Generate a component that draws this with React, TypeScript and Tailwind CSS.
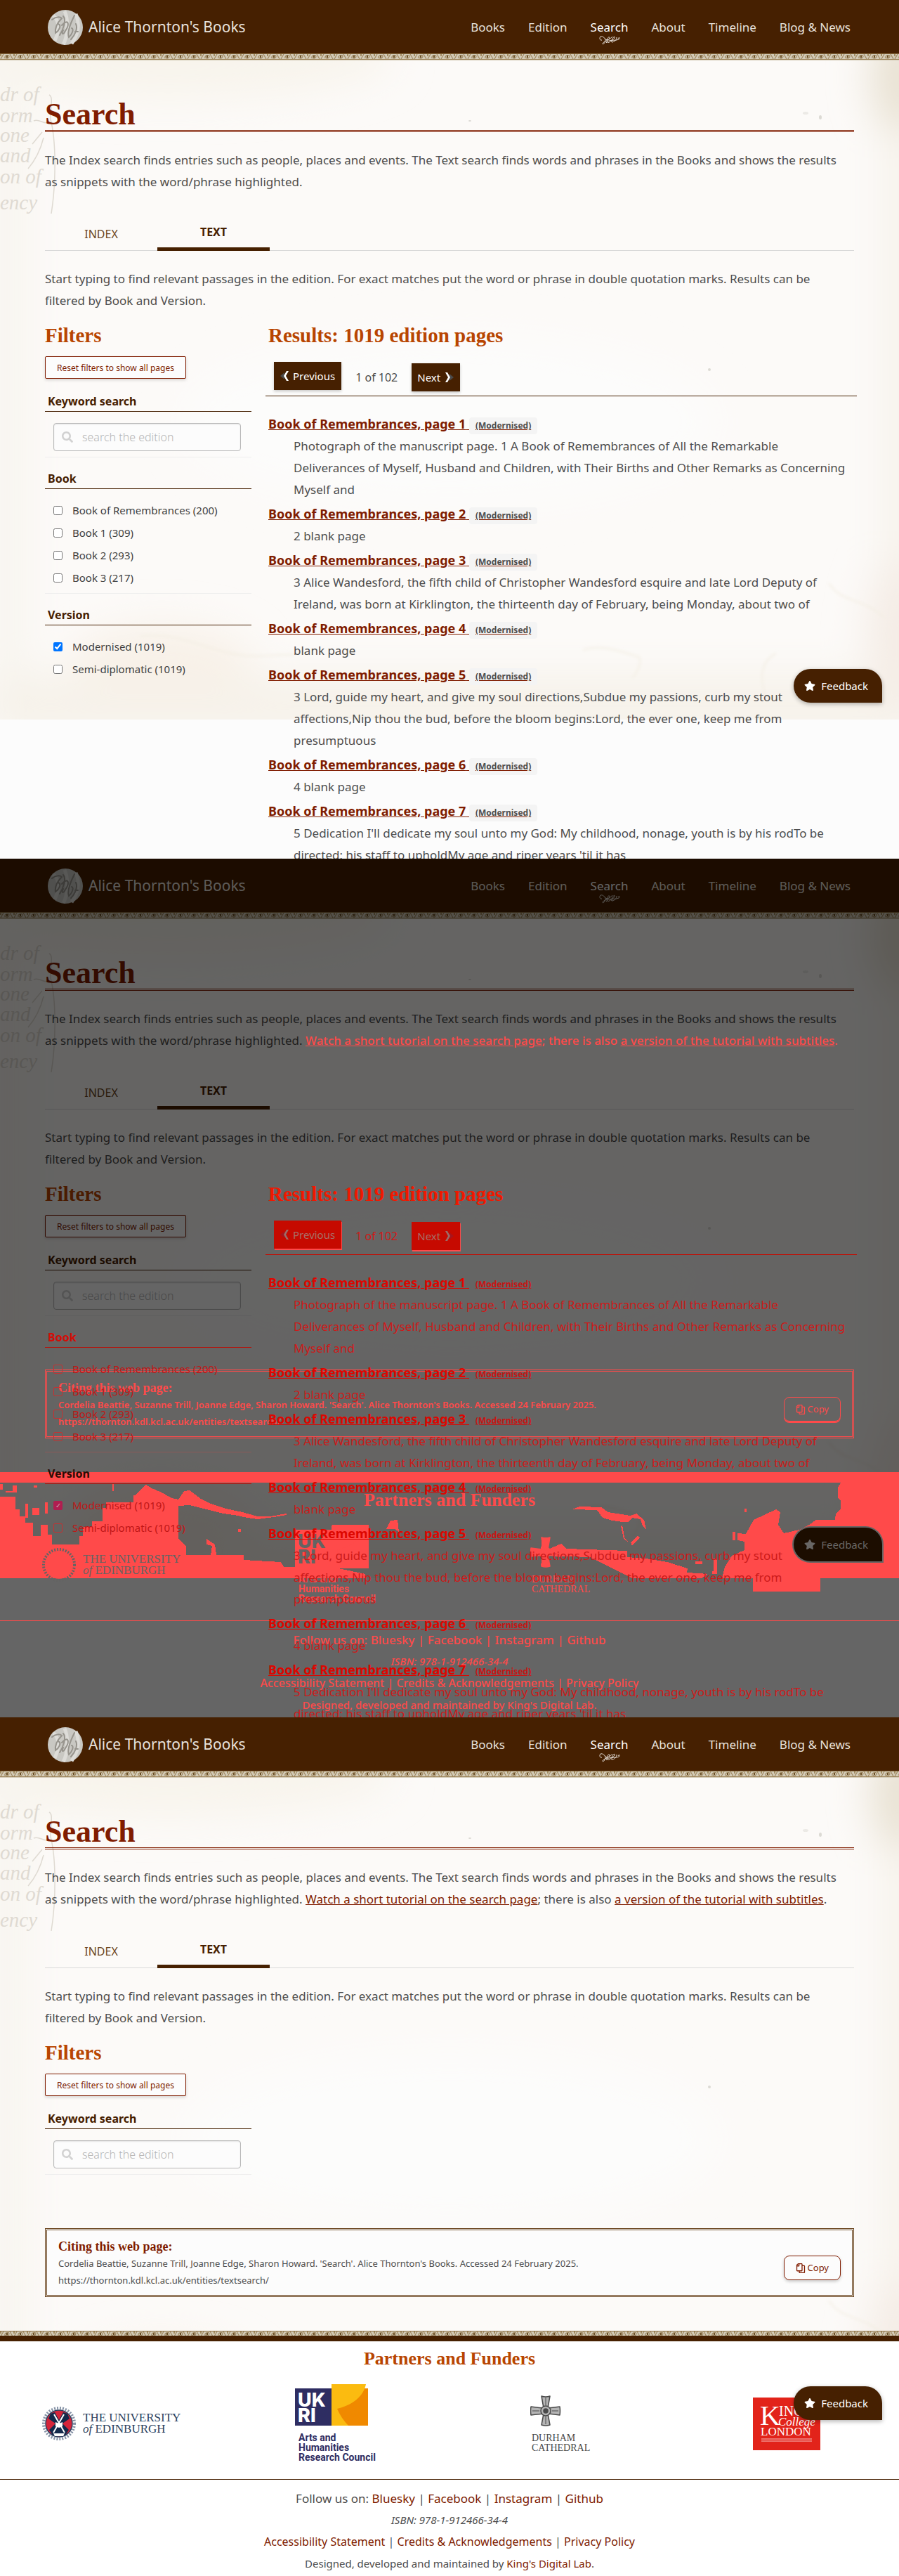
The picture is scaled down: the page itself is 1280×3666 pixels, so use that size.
import React, { useId } from "react";
import { FaSearch, FaStar, FaRegCopy } from "react-icons/fa";

type Variant = "before" | "diff" | "after";

const navItems = ["Books", "Edition", "Search", "About", "Timeline", "Blog & News"];

const results = [
  "Photograph of the manuscript page. 1 A Book of Remembrances of All the Remarkable Deliverances of Myself, Husband and Children, with Their Births and Other Remarks as Concerning Myself and",
  "2 blank page",
  "3 Alice Wandesford, the fifth child of Christopher Wandesford esquire and late Lord Deputy of Ireland, was born at Kirklington, the thirteenth day of February, being Monday, about two of",
  "blank page",
  "3 Lord, guide my heart, and give my soul directions,Subdue my passions, curb my stout affections,Nip thou the bud, before the bloom begins:Lord, the ever one, keep me from presumptuous",
  "4 blank page",
  "5 Dedication I'll dedicate my soul unto my God: My childhood, nonage, youth is by his rodTo be directed; his staff to upholdMy age and riper years 'til it has",
];

function Parchment() {
  const id = useId();
  return (
    <svg
      aria-hidden="true"
      className="absolute inset-x-0 top-0 -z-10 h-[1024px] w-full"
      viewBox="0 0 1280 1024"
      preserveAspectRatio="none"
    >
      <defs>
        <filter id={id + "b"} x="-50%" y="-50%" width="200%" height="200%">
          <feGaussianBlur stdDeviation="28" />
        </filter>
        <filter id={id + "s"} x="-50%" y="-50%" width="200%" height="200%">
          <feGaussianBlur stdDeviation="2" />
        </filter>
      </defs>
      <rect width="1280" height="1024" fill="#fcfaf8" />
      <g filter={`url(#${id}b)`}>
        <ellipse cx="240" cy="80" rx="320" ry="60" fill="#f8f4ec" />
        <rect x="-20" y="60" width="60" height="960" fill="#f8f5ef" />
        <rect x="1260" y="60" width="60" height="960" fill="#f6f2ea" />
        <ellipse cx="1285" cy="110" rx="45" ry="80" fill="#e8e1d2" />
        <rect x="-20" y="960" width="1320" height="90" fill="#f6f2ea" />
        <ellipse cx="1285" cy="900" rx="50" ry="110" fill="#f4ece5" />
        <ellipse cx="230" cy="940" rx="130" ry="50" fill="#f8f1e8" />
        <ellipse cx="640" cy="600" rx="380" ry="120" fill="#fcfcfb" />
      </g>
      <g fill="none" stroke="#f3eee3" strokeWidth="2" filter={`url(#${id}s)`}>
        <path d="M200 905C260 900 290 925 340 932C370 937 400 930 420 932" />
        <path d="M830 925C860 915 890 930 910 935C915 945 905 960 900 965" />
        <path d="M1090 990C1080 960 1085 940 1105 930" />
        <path d="M1180 830C1200 860 1230 850 1260 880" />
      </g>
      <g fill="#dcdad4">
        <ellipse cx="1168" cy="167" rx="2" ry="3" />
        <ellipse cx="1147" cy="161" rx="4" ry="2" opacity=".5" />
        <ellipse cx="669" cy="172" rx="2" ry="1" />
        <ellipse cx="1010" cy="526" rx="2" ry="2" />
      </g>
      <g fill="#dfdad2" fontFamily="'Liberation Serif', serif" fontStyle="italic" fontSize="29">
        <text x="0" y="144">dr of</text>
        <text x="0" y="174">orm</text>
        <text x="0" y="202">one</text>
        <text x="0" y="231">and</text>
        <text x="0" y="261">on of</text>
        <text x="0" y="298">ency</text>
      </g>
      <path
        d="M70 135C76 138 72 150 72 170C80 200 80 260 73 304M48 172C56 168 62 178 70 174M60 188L46 205M62 196C58 212 52 226 40 240"
        fill="none"
        stroke="#dfdad2"
        strokeWidth="1.5"
      />
    </svg>
  );
}

function LaceBand({ tall }: { tall?: boolean }) {
  const id = useId();
  return (
    <svg aria-hidden="true" className={tall ? "block h-[10px] w-full" : "block h-[7px] w-full"}>
      <defs>
        <pattern id={id} width="19" height="10" patternUnits="userSpaceOnUse">
          <rect width="19" height="10" fill="#d3cbb8" />
          <rect width="19" height="1" fill="#8a6c3e" />
          <rect y="8" width="19" height="1" fill="#9a8054" />
          <path d="M1 8L5 1M18 8L14 1M7 7C6 3 12 1 13 4C13 7 9 8 8 6" fill="none" stroke="#a08860" strokeWidth="1.2" />
          <rect x="9" y="3" width="2" height="3" fill="#6b5028" />
          <rect x="0" y="1" width="2" height="3" fill="#a48d62" />
        </pattern>
      </defs>
      <rect width="100%" height="10" fill={`url(#${id})`} />
    </svg>
  );
}

function Monogram() {
  return (
    <svg aria-hidden="true" viewBox="0 0 50 50" className="size-[50px]">
      <circle cx="25" cy="25" r="25" fill="#c9c8c3" />
      <path
        d="M8 8C20 20 14 34 10 44M40 6C46 20 44 34 34 48M24 2C30 14 28 40 22 49"
        stroke="#dddcd8"
        strokeWidth="5"
        fill="none"
      />
      <path
        d="M6 14C12 9 18 10 20 12C14 18 10 26 11 33C16 30 20 22 15 20M22 9C27 14 22 28 17 36M20 22C29 12 32 20 25 30C22 36 19 35 22 29M38 8C33 18 27 32 30 39C34 36 38 27 34 26M40 20C43 26 39 36 33 42M39 31L43 31"
        fill="none"
        stroke="#97948d"
        strokeWidth="2"
        strokeLinecap="round"
      />
    </svg>
  );
}

function Flourish() {
  return (
    <svg aria-hidden="true" viewBox="0 0 30 13" className="absolute left-1/2 top-full h-[13px] w-[30px] -translate-x-1/2">
      <path
        d="M4 6C1 7 0 3 2 1C5 0 9 3 9 7C8 11 5 13 5 11C6 8 14 7 15 3C15 0 11 3 11 7C11 11 15 10 18 6C20 1 23 0 22 3C20 6 15 9 19 9C23 8 25 5 25 2M10 10C14 4 22 8 28 5C31 3 28 1 27 4M8 4C12 8 16 4 19 1"
        fill="none"
        stroke="#e6dfd8"
        strokeWidth="1"
      />
    </svg>
  );
}

function Header() {
  return (
    <header>
      <div className="flex h-[76px] items-center justify-between bg-[#462001] pl-[68px] pr-[69px] pt-0.5 text-[#e8e2dc]">
        <a href="#" className="flex items-center gap-2 text-[21px]">
          <Monogram />
          Alice Thornton's Books
        </a>
        <nav className="flex gap-[33px] text-[17px] leading-6">
          {navItems.map((item) => (
            <a key={item} href="#" className={item === "Search" ? "relative text-white" : ""}>
              {item}
              {item === "Search" && <Flourish />}
            </a>
          ))}
        </nav>
      </div>
      <LaceBand tall />
    </header>
  );
}

function FilterGroup({
  title,
  options,
  changed,
  titleChanged,
  last,
}: {
  title: string;
  options: [string, boolean][];
  changed: boolean;
  titleChanged?: boolean;
  last?: boolean;
}) {
  const id = useId();
  return (
    <section className={changed ? "relative z-30" : ""}>
      <h3
        className={
          "mt-[18px] border-b px-1 pb-0.5 text-[16px] font-bold leading-6 " +
          (changed
            ? "border-[#b81008] " + (titleChanged ? "text-[#d40c06]" : "text-[#2a0c04]")
            : "border-[#462001] text-[#462001]")
        }
      >
        {title}
      </h3>
      <ul
        className={
          "mt-[14px] " +
          (last ? "" : changed ? "border-b border-[#8c5a58] pb-[6px]" : "border-b border-[#eeeeee] pb-[6px]")
        }
      >
        {options.map(([label, checked]) => (
          <li key={label} className="flex h-8 items-center pl-3">
            <input
              id={id + label}
              type="checkbox"
              defaultChecked={checked}
              className={
                changed
                  ? "grid size-[13px] appearance-none place-items-center rounded-[2px] border border-[#c43232] text-[10px] leading-none text-[#c9a0b0] checked:border-[#b01e50] checked:bg-[#b01e50] checked:before:content-['✓']"
                  : "size-[13px] accent-[#0075ff]"
              }
            />
            <label
              htmlFor={id + label}
              className={"pl-[14px] text-[15px] " + (changed ? "text-[#c01616]" : "text-[#3f3f3f]")}
            >
              {label}
            </label>
          </li>
        ))}
      </ul>
    </section>
  );
}

function Filters({ variant }: { variant: Variant }) {
  const id = useId();
  const changed = variant === "diff";
  return (
    <aside>
      <h2 className="pb-0.5 font-['Liberation_Serif',serif] text-[29px] font-bold leading-[30px] text-[#b84500]">
        Filters
      </h2>
      <button
        type="button"
        className="mt-[13px] block h-8 rounded-[2px] border border-[#801c00] bg-[#fcfcfc] px-4 text-[12px] text-[#801c00] shadow-[0_2px_4px_rgba(0,0,0,0.15)]"
      >
        Reset filters to show all pages
      </button>
      <h3 className="mt-5 border-b border-[#462001] px-1 pb-0.5 text-[16px] font-bold leading-6 text-[#462001]">
        <label htmlFor={id}>Keyword search</label>
      </h3>
      <div className="border-b border-[#eeeeee] pb-2 pl-3 pr-[15px] pt-4">
        <div className="flex h-10 items-center rounded border border-[#b8b8b8] bg-[#fcfcfc] pl-[11px] shadow-[inset_0_1px_2px_rgba(0,0,0,0.1)]">
          <FaSearch className="size-4 shrink-0 text-[#d2d2d2]" aria-hidden="true" />
          <input
            id={id}
            type="text"
            placeholder="search the edition"
            className="min-w-0 flex-1 bg-transparent pl-[13px] text-[16px] font-light outline-none placeholder:text-[#b5b5b5]"
          />
        </div>
      </div>
      {variant !== "after" && (
        <>
          <FilterGroup
            title="Book"
            changed={changed}
            titleChanged
            options={[
              ["Book of Remembrances (200)", false],
              ["Book 1 (309)", false],
              ["Book 2 (293)", false],
              ["Book 3 (217)", false],
            ]}
          />
          <FilterGroup
            title="Version"
            changed={changed}
            last
            options={[
              ["Modernised (1019)", true],
              ["Semi-diplomatic (1019)", false],
            ]}
          />
        </>
      )}
    </aside>
  );
}

function Chevron({ flip, changed }: { flip?: boolean; changed: boolean }) {
  return (
    <svg aria-hidden="true" viewBox="0 0 16 16" className={flip ? "size-4 rotate-180" : "size-4"}>
      <path d="M7 3L1 8L7 13Z" fill={changed ? "#a8141c" : "#4a4a4a"} />
      <path d="M13 1L10 1L6 8L10 15L13 15L9 8Z" fill={changed ? "#9c6c68" : "#ffffff"} />
    </svg>
  );
}

function Results({ changed }: { changed: boolean }) {
  const button =
    "flex h-10 items-center text-[15px] " +
    (changed
      ? "bg-[#c60a00] text-[#a87068] shadow-[1px_2px_0_#ff4a4a]"
      : "bg-[#462001] text-white shadow-[0_2px_4px_rgba(0,0,0,0.2)]");
  return (
    <section className={"-mr-1 " + (changed ? "relative z-30" : "")}>
      <h2
        className={
          "pb-0.5 pl-1 font-['Liberation_Serif',serif] text-[29px] font-bold leading-[30px] " +
          (changed ? "text-[#f01800]" : "text-[#b84500]")
        }
      >
        Results: 1019 edition pages
      </h2>
      <div
        className={
          "mt-[21px] flex items-start gap-5 border-b pb-[6px] pl-3 " +
          (changed ? "border-[#c60a00]" : "border-[#462001]")
        }
      >
        <button type="button" className={button + " gap-[3px] pl-2 pr-[9px]"}>
          <Chevron changed={changed} />
          Previous
        </button>
        <span className={"mt-0.5 text-[16px] leading-10 " + (changed ? "text-[#d01818]" : "text-[#4d4d4d]")}>
          1 of 102
        </span>
        <button type="button" className={button + " mt-0.5 gap-1 px-2"}>
          Next
          <Chevron flip changed={changed} />
        </button>
      </div>
      <ol className="mt-6 flex flex-col gap-1 pl-1 text-[17px] leading-[31px]">
        {results.map((text, i) => (
          <li key={i}>
            <a href="#" className={"text-[18px] font-bold underline " + (changed ? "text-[#dd0600]" : "text-[#801c00]")}>
              Book of Remembrances, page {i + 1}{" "}
              <span
                className={
                  "inline-block rounded px-[9px] text-[12px] leading-6 underline " +
                  (changed ? "text-[#c81414]" : "bg-[#f4f4f4] text-[#4d4d4d] decoration-[#801c00]")
                }
              >
                (Modernised)
              </span>
            </a>
            <p className={"pl-9 pr-2 " + (changed ? "text-[#cc1a1a]" : "text-[#4d4d4d]")}>{text}</p>
          </li>
        ))}
      </ol>
    </section>
  );
}

function EdinburghLogo({ mono }: { mono?: boolean }) {
  const navy = mono ? "#ff4a4a" : "#2b3f5e";
  return (
    <svg role="img" aria-label="The University of Edinburgh" viewBox="0 0 200 50" className="h-[50px] w-[200px]">
      <circle cx="24" cy="25" r="22" fill="none" stroke={mono ? "#646463" : "#8592a6"} strokeWidth="4" strokeDasharray="2 2" />
      <circle cx="24" cy="25" r="19" fill={mono ? "#ff4a4a" : "#d5243a"} stroke={navy} strokeWidth="1.5" />
      {!mono && (
        <>
          <path
            d="M12 11L18 9L24 20L30 9L36 11L39 18L29 25L38 34L33 42H15L10 34L19 25L9 18Z"
            fill="#13294b"
          />
          <path d="M17 12L32 38M31 12L16 38" stroke="#fff" strokeWidth="2" />
          <path d="M19 23L24 25L29 23V29L24 31L19 29Z" fill="#fff" />
          <path d="M16 39H32L30 43H18Z" fill="#fff" />
        </>
      )}
      <g fill={mono ? "#646463" : navy} fontFamily="'Liberation Serif', serif" fontSize="17">
        <text x="58" y="22">THE UNIVERSITY</text>
        <text x="58" y="38">
          <tspan fontStyle="italic">of</tspan> EDINBURGH
        </text>
      </g>
    </svg>
  );
}

function UkriLogo({ mono }: { mono?: boolean }) {
  const navy = mono ? "#ff4a4a" : "#2e2d62";
  return (
    <svg role="img" aria-label="UKRI Arts and Humanities Research Council" viewBox="0 0 120 112" className="h-[112px] w-[120px]">
      <rect y="6" width="52" height="53" fill={navy} />
      <rect x="52" y="6" width="52" height="53" fill={mono ? "#ff4a4a" : "#f08900"} />
      <path d="M52 0H101C98 16 84 29 60 35C64 44 69 52 76 59H52Z" fill={mono ? "#ff4a4a" : "#fbbb10"} />
      <g fill={mono ? "#646463" : "#ffffff"} fontFamily="Inter, sans-serif" fontWeight="800" fontSize="27">
        <text x="4" y="32">UK</text>
        <text x="4" y="54">RI</text>
      </g>
      <g fill={navy} fontFamily="Roboto, sans-serif" fontWeight="700" fontSize="14">
        <text x="5" y="81">Arts and</text>
        <text x="5" y="95">Humanities</text>
        <text x="5" y="109">Research Council</text>
      </g>
    </svg>
  );
}

function DurhamLogo({ mono }: { mono?: boolean }) {
  const ink = mono ? "#ff4a4a" : "#4a4a4a";
  return (
    <svg role="img" aria-label="Durham Cathedral" viewBox="0 0 90 80" className="h-20 w-[90px]">
      <g fill={mono ? "#ff4a4a" : "#b4b4b4"} stroke={ink} strokeWidth="1.5" strokeLinejoin="round">
        <path d="M16 1Q22 3 28 1L25 18Q35 17 42 16Q43 22 42 28Q35 27 25 26L28 42Q22 44 16 42L19 26Q9 27 1 28Q0 22 1 16Q9 17 19 18Z" />
        <circle cx="22" cy="22" r="7" />
        <circle cx="22" cy="22" r="3" fill={ink} />
      </g>
      <path d="M22 3V14M22 30V41M3 22H13M31 22H40" stroke={ink} />
      <g fill={ink} fontFamily="'Liberation Serif', serif" fontSize="14">
        <text x="2" y="65">DURHAM</text>
        <text x="2" y="79">CATHEDRAL</text>
      </g>
    </svg>
  );
}

function KingsLogo({ mono }: { mono?: boolean }) {
  return (
    <svg role="img" aria-label="King's College London" viewBox="0 0 96 75" className="h-[75px] w-24">
      <rect width="96" height="75" fill={mono ? "#ff4a4a" : "#e2231a"} />
      {!mono && (
        <>
          <g fill="#ffffff" fontFamily="'Liberation Serif', serif">
            <text x="10" y="39" fontSize="40">K</text>
            <text x="37" y="26" fontSize="20">ING'S</text>
            <text x="36" y="40" fontSize="17" fontStyle="italic">College</text>
            <text x="11" y="54" fontSize="17">LONDON</text>
          </g>
          <path d="M12 59H84M12 62H84" stroke="#f7c6c3" strokeWidth="1" />
        </>
      )}
    </svg>
  );
}

function DiffStain() {
  return (
    <svg
      aria-hidden="true"
      viewBox="0 0 1280 136"
      preserveAspectRatio="none"
      className="absolute inset-x-0 top-[15px] -z-10 h-[136px] w-full"
      fill="#ff4a4a"
      shapeRendering="crispEdges"
    >
      <path d="M0 20H22V38H28V48H36V57H47V76H58V60H68V74H74V88H113V76H118V63H131V55H146V36H151V28H190V18H192L196 14L208 3L216 8L228 13L245 22L254 24L262 12L270 11L286 23L300 30L322 37L345 42L367 48H385L408 44V46L390 49L367 52L352 50L339 47L318 44L294 38L270 32L254 33V80L265 90V103H300L302 90L294 88V80L306 88L308 103H347V110L400 113L404 120H420V68H473V60H525V122H482L520 130V136H0Z" />
      <path d="M0 2H4V10H0ZM8 14H24V4H18V12H8ZM48 4H53V7H48ZM36 30H40V50H36ZM46 36H56V46H46ZM64 28H68V44H64ZM160 2H162V12H160ZM339 66H343V70H339Z" />
      <path d="M550 66L556 54L566 53L568 70L562 66H553Z" />
      <path d="M815 38L825 34L856 35L866 42L885 45L897 47L906 44L917 53L920 66L915 62L912 52L900 50L894 56H886L872 54L858 50L850 39Z" />
      <path d="M886 60L889 78L894 84L888 80L884 62ZM898 85L908 76L911 78L900 90Z" />
      <path d="M754 97L770 95L772 78H783L780 95L799 87L806 94L893 97V106L920 108L950 113L979 122L978 128L1008 130L999 136H900L868 120L840 106L780 104L782 118H770L772 106Z" />
      <path d="M1028 136L1032 120L1042 104L1060 96V84L1050 82V72L1062 73L1073 53L1088 46L1105 38L1111 42L1108 60L1116 72L1138 67L1152 60L1162 53H1189L1190 44L1197 37V25L1193 22V7L1197 0H1280V136Z" />
      <path d="M1014 126H1016V108H1021V130H1014ZM1043 70H1047V82H1043ZM990 112H1000V116H990ZM1060 37H1063V42H1060Z" />
    </svg>
  );
}

function CitationAndFooter({ mono }: { mono?: boolean }) {
  const link = mono ? "text-[#ff4a4a]" : "text-[#801c00]";
  const body = mono ? "text-[#ff4a4a]" : "text-[#4d4d4d]";
  return (
    <>
      <section
        className={
          "mx-16 flex items-end justify-between border-[3px] border-double px-4 pb-[9px] pt-[11px] " +
          (mono ? "border-[#ff4a4a]" : "border-[#6b4620] bg-[#fcfcfc]")
        }
      >
        <div className={"text-[13px] leading-6 " + body + (mono ? " font-semibold" : "")}>
          <h2 className={"font-['Liberation_Serif',serif] text-[18px] font-bold leading-6 " + link}>
            Citing this web page:
          </h2>
          <p>
            Cordelia Beattie, Suzanne Trill, Joanne Edge, Sharon Howard. 'Search'. Alice Thornton's Books. Accessed 24
            February 2025.
          </p>
          <p>https://thornton.kdl.kcl.ac.uk/entities/textsearch/</p>
        </div>
        <button
          type="button"
          className={
            "mb-3 flex h-[35px] items-center gap-[3px] rounded-lg border px-4 text-[13px] " +
            (mono
              ? "border-[#ff4a4a] text-[#ff4a4a] shadow-[0_2px_0_#ff4a4a]"
              : "border-[#801c00] text-[#801c00] shadow-[0_2px_4px_rgba(0,0,0,0.2)]")
          }
        >
          <FaRegCopy className="size-[14px] -scale-x-100" aria-hidden="true" />
          Copy
        </button>
      </section>
      <footer className={"relative mt-12 " + (mono ? "isolate" : "bg-white")}>
        {mono ? (
          <>
            <div className="h-[15px] bg-[#ff4a4a]" />
            <DiffStain />
          </>
        ) : (
          <>
            <LaceBand />
            <div className="h-2 bg-[#462001]" />
          </>
        )}
        <h2
          className={
            "pb-px pt-[9px] text-center font-['Liberation_Serif',serif] text-[26px] font-bold leading-8 " +
            (mono ? "text-[#ff4a4a]" : "text-[#b84500]")
          }
        >
          Partners and Funders
        </h2>
        <div
          className={
            "mt-[19px] grid grid-cols-4 place-items-center border-b pb-[23px] " +
            (mono ? "border-[#ff4a4a]" : "border-[#462001]")
          }
        >
          <EdinburghLogo mono={mono} />
          <UkriLogo mono={mono} />
          <DurhamLogo mono={mono} />
          <KingsLogo mono={mono} />
        </div>
        <div
          className={
            "pb-0.5 pt-[11px] text-center text-[15px] leading-[31px] " + body + (mono ? " font-medium" : "")
          }
        >
          <p className="text-[17px]">
            Follow us on: <a href="#" className={link}>Bluesky</a> | <a href="#" className={link}>Facebook</a> |{" "}
            <a href="#" className={link}>Instagram</a> | <a href="#" className={link}>Github</a>
          </p>
          <p className="italic">ISBN: 978-1-912466-34-4</p>
          <p className="text-[16px]">
            <a href="#" className={link}>Accessibility Statement</a> |{" "}
            <a href="#" className={link}>Credits &amp; Acknowledgements</a> |{" "}
            <a href="#" className={link}>Privacy Policy</a>
          </p>
          <p>
            Designed, developed and maintained by <a href="#" className={link}>King's Digital Lab</a>.
          </p>
        </div>
      </footer>
    </>
  );
}

function Page({ variant }: { variant: Variant }) {
  const changed = variant === "diff";
  return (
    <div
      className={
        "relative isolate bg-[#fcfcfc] text-[#4d4d4d] " + (variant === "after" ? "" : "h-[1222px] overflow-hidden")
      }
    >
      <Parchment />
      <Header />
      <main className="px-16 pt-14 text-[17px] leading-[31px]">
        <h1 className="border-b-[3px] border-double border-[#801c00] pb-[2px] font-['Liberation_Serif',serif] text-[44px] font-bold leading-[41px] text-[#801c00]">
          Search
        </h1>
        <p className="mt-6 pr-4">
          The Index search finds entries such as people, places and events. The Text search finds words and phrases in
          the Books and shows the results as snippets with the word/phrase highlighted.{" "}
          {variant !== "before" && (
            <span className={changed ? "relative z-20 font-medium text-[#ff4a4a]" : ""}>
              <a href="#" className={changed ? "underline" : "text-[#801c00] underline"}>
                Watch a short tutorial on the search page
              </a>
              ; there is also{" "}
              <a href="#" className={changed ? "underline" : "text-[#801c00] underline"}>
                a version of the tutorial with subtitles
              </a>
              .
            </span>
          )}
        </p>
        <div role="tablist" className="mt-[34px] flex h-[49px] border-b border-[#d9d9d9] text-[16px] leading-6">
          <button type="button" role="tab" aria-selected="false" className="-mb-px w-40 text-[#6b4620]">
            INDEX
          </button>
          <button
            type="button"
            role="tab"
            aria-selected="true"
            className="-mb-px w-40 border-b-[5px] border-[#462001] font-bold text-[#462001]"
          >
            TEXT
          </button>
        </div>
        <p className="mt-6 pr-4">
          Start typing to find relevant passages in the edition. For exact matches put the word or phrase in double
          quotation marks. Results can be filtered by Book and Version.
        </p>
        <div className="mt-[19px] grid grid-cols-[294px_1fr] gap-x-5">
          <Filters variant={variant} />
          {variant !== "after" && <Results changed={changed} />}
        </div>
      </main>
      {variant === "after" && (
        <div className="mt-[76px]">
          <CitationAndFooter />
        </div>
      )}
      {changed && (
        <>
          <div className="absolute inset-0 z-10 bg-black/60" />
          <div className="absolute inset-x-0 top-[727px] z-20">
            <CitationAndFooter mono />
          </div>
        </>
      )}
      <button
        type="button"
        className={
          "absolute right-6 top-[952px] z-40 flex h-12 items-center gap-2 rounded-t-[24px] rounded-bl-[24px] pl-[15px] pr-5 text-[15px] " +
          (changed
            ? "bg-[#1c0d00] text-[#686664] ring-2 ring-[#646463]"
            : "bg-[#462001] text-white shadow-[0_2px_6px_rgba(0,0,0,0.3)]")
        }
      >
        <FaStar className="size-4" aria-hidden="true" />
        Feedback
      </button>
    </div>
  );
}

export default function App() {
  return (
    <div className="font-['Noto_Sans',sans-serif]">
      <Page variant="before" />
      <Page variant="diff" />
      <Page variant="after" />
    </div>
  );
}
